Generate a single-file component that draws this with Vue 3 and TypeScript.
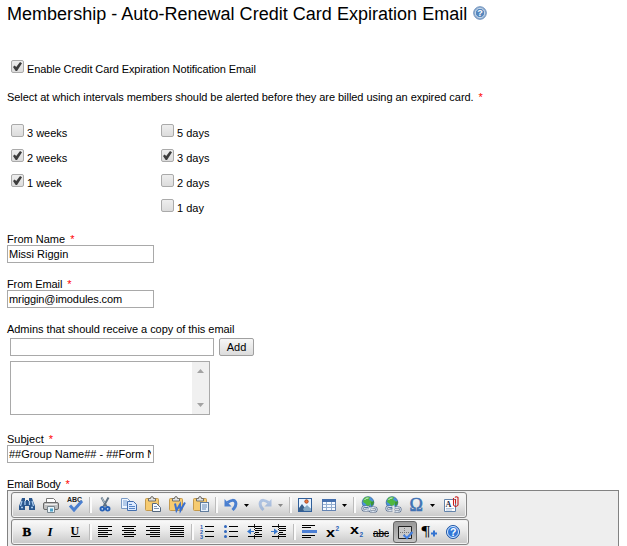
<script setup lang="ts">
import { ref } from 'vue'

interface Tool {
  kind: 'icon' | 'sep' | 'caret'
  name?: string
  art?: string
  active?: boolean
  muted?: boolean
}

const weeks = ref([
  { label: '3 weeks', on: false },
  { label: '2 weeks', on: true },
  { label: '1 week', on: true },
])
const days = ref([
  { label: '5 days', on: false },
  { label: '3 days', on: true },
  { label: '2 days', on: false },
  { label: '1 day', on: false },
])
const enabled = ref(true)
const fromName = ref('Missi Riggin')
const fromEmail = ref('mriggin@imodules.com')
const admin = ref('')
const subject = ref('##Group Name## - ##Form Name##')

const icon = (name: string, art: string, active = false): Tool => ({ kind: 'icon', name, art, active })
const sep: Tool = { kind: 'sep' }
const caret = (muted = false): Tool => ({ kind: 'caret', muted })

const rules = (rows: [number, number][], y = 6) =>
  rows.map(([x, w], i) => `<rect x="${x}" y="${y + i * 2}" width="${w}" height="1" fill="#000"/>`).join('')

const serif = 'font-family="Liberation Serif, serif"'
const sans = 'font-family="Liberation Sans, sans-serif"'
const clipboard =
  '<rect x="4.500" y="5.500" width="13" height="12" rx="1" fill="#f6cb70" stroke="#c59a4c"/><path d="M7.500 8V5.500h2q0-2 1.500-2t1.500 2h2V8z" fill="#dde0e3" stroke="#68655e" stroke-width=".9"/>'
const globe =
  '<circle cx="11" cy="9.500" r="5.800" fill="#4a92dd" stroke="#33689c" stroke-width=".8"/><path d="M7 5q3-2 6-1l-1 3 3 1-2 4-3 2-1-3-3-2z" fill="#4fb83e"/><path d="M14 9l3-1q0 4-3 5z" fill="#3b9435"/><path d="M7.500 7q1.500-2.500 4-2" stroke="#e0f4ef" fill="none"/>'
const link = (gap: boolean) => {
  const rings = '<rect x="5.500" y="13.500" width="7" height="4" rx="2"/><rect x="12.500" y="14.500" width="7" height="4" rx="2"/>'
  return `<g fill="none" stroke="#5d7190" stroke-width="2.200">${rings}</g><g fill="none" stroke="#d8e3f0" stroke-width="1">${rings}</g>${gap ? '<path d="M12.500 12.500v7" stroke="#e4e4e4" stroke-width="2"/>' : '<path d="M9.500 16h6" stroke="#eef4fa"/>'}`
}
const undo =
  '<path d="M8.500 9.500q6-4 8-.5 1.500 4-3 8" fill="none" stroke="#4a7fd0" stroke-width="3"/><path d="M5.500 6v7.500h7z" fill="#4a7fd0"/>'
const indentRules =
  '<path d="M5 6.500h14M12 8.500h7m-7 2h7m-7 2h4m-4 2h7M5 16.500h14" stroke="#000"/><path d="M11.500 4v2m0 1v1m0 1v1m0 3v1m0 1v1m0 1v2" stroke="#222"/>'

const topRow: Tool[] = [
  icon('Find', '<path d="M7 5h3v3h1V7h2v1h1V5h3l1 3 2 5v4h-6v-4h-4v4H4v-4l2-5z" fill="#29578f"/><path d="M7 8l-1.500 5M10 8v4M14.500 8v4M17 8l1.500 5M6 14.500h2M16 14.500h2" stroke="#a9cbef" stroke-width="1.300"/>'),
  icon('Print', '<path d="M7.500 10V5.500h7l2 2V10" fill="#fff" stroke="#777"/><rect x="4.500" y="9.500" width="15" height="7" rx="1.500" fill="#c0c0c0" stroke="#696969"/><path d="M6 11.500h12" stroke="#eee"/><path d="M8.500 13.500h7v6h-7z" fill="#eaf5fb" stroke="#79858d"/><path d="M11 15.500h3v3h-3z" fill="#4ba2ca"/>'),
  icon('Spell check', `<text x="4" y="9" font-size="7" font-weight="bold" textLength="15" ${sans} fill="#222">ABC</text><path d="M7 12.500l4 4.500 8-9" fill="none" stroke="#4b7fd0" stroke-width="3"/>`),
  sep,
  icon('Cut', '<path d="M8.500 4.500l5 9M15.500 4.500l-5 9" stroke="#5f7385" stroke-width="2"/><path d="M9 5l2.500 5" stroke="#dce7ef" stroke-width=".7"/><circle cx="9.300" cy="15.800" r="1.800" fill="#cfe0f5" stroke="#2862b7" stroke-width="1.900"/><circle cx="14.700" cy="15.800" r="1.800" fill="#cfe0f5" stroke="#2862b7" stroke-width="1.900"/>'),
  icon('Copy', '<path d="M4.500 5.500h6l3 3v7h-9z" fill="#edf5ff" stroke="#7b9bc5"/><path d="M6 8h4m-4 2h5m-5 2h5" stroke="#79a0d5"/><path d="M10.500 8.500h6l3 3v6h-9z" fill="#dceaff" stroke="#446fae"/><path d="M12 11.500h3m-3 2h6m-6 2h6" stroke="#5684c5"/>'),
  icon('Paste', clipboard + '<path d="M11.500 10.500h4l4 4v4h-8z" fill="#f7fbff" stroke="#54677d"/><path d="M13 13.500h3m-3 2h5" stroke="#7e94b1"/>'),
  icon('Paste from Word', clipboard + '<path d="M10 10.500l1.500 7 3.500-6 .5 6 4.500-8" fill="none" stroke="#3a70cf" stroke-width="2"/>'),
  icon('Paste as text', clipboard + '<rect x="11.500" y="9.500" width="8" height="9" fill="#e9f2fd" stroke="#617d9e"/><path d="M13 12h5m-5 2h5m-5 2h4" stroke="#6789b4"/>'),
  sep,
  icon('Undo', undo),
  caret(),
  icon('Redo', `<g transform="translate(24 0) scale(-1 1)" opacity=".38">${undo}</g>`),
  caret(true),
  sep,
  icon('Image', '<rect x="5.500" y="5.500" width="13" height="13" fill="#e6f2ff" stroke="#315f99"/><path d="M6 18v-3l3-4 3 4 2-2 4 3v2z" fill="#385f8c"/><path d="M10 16l4-4 4 4v2h-7z" fill="#86a9c5"/><circle cx="13.500" cy="8.500" r="1.700" fill="#ef793e" stroke="#a94824"/>'),
  icon('Table', '<rect x="5.500" y="6.500" width="13" height="11" fill="#f5f9ff" stroke="#6584b3"/><path d="M5 6h14v3H5z" fill="#446fae"/><path d="M9.500 9v8m5-8v8M6 11.500h12m-12 3h12" stroke="#94aed0"/>'),
  caret(),
  sep,
  icon('Insert link', globe + link(false)),
  icon('Remove link', globe + link(true)),
  icon('Symbol', `<text x="4.500" y="17.500" font-size="18" ${serif} fill="#3f72b4" stroke="#3f72b4" stroke-width=".6">Ω</text>`),
  caret(),
  icon('Template', `<path d="M5.500 6.500h11v12h-11z" fill="#fff" stroke="#6283aa"/><text x="6.500" y="14" font-size="8" font-weight="bold" ${serif} fill="#222a42">A</text><path d="M7 15.500h8m-8 1.500h6" stroke="#9fb6d4" stroke-width=".8"/><path d="M16.500 6v4.500M14.500 5v7q2 3 4.500 0V4.500q-2-1.500-3 0" fill="none" stroke="#c91f1d" stroke-width="1.100"/>`),
]

const full: [number, number] = [5, 14]
const bottomRow: Tool[] = [
  icon('Bold', `<text x="7.500" y="16" font-size="13" font-weight="bold" ${serif} stroke="#000" stroke-width=".4">B</text>`),
  icon('Italic', `<text x="8.500" y="16" font-size="13" font-weight="bold" font-style="italic" ${serif}>I</text>`),
  icon('Underline', `<text x="7.500" y="15" font-size="12" font-weight="bold" ${serif}>U</text><path d="M8 16.500h9" stroke="#000"/>`),
  sep,
  icon('Align left', rules([full, [5, 10], full, [5, 10], full, [5, 10]])),
  icon('Align center', rules([full, [7, 10], full, [7, 10], full, [7, 10]])),
  icon('Align right', rules([full, [9, 10], full, [9, 10], full, [9, 10]])),
  icon('Justify', rules([full, full, full, full, full, full])),
  sep,
  icon('Numbered list', `<g ${sans} font-size="5.500" font-weight="bold" fill="#285bb5"><text x="5" y="8.500">1</text><text x="5" y="13.500">2</text><text x="5" y="18.500">3</text></g><path d="M10 6.500h9m-9 5h9m-9 5h9" stroke="#000"/>`),
  icon('Bulleted list', '<g fill="#3268bd"><circle cx="6.500" cy="6.500" r="1.500"/><circle cx="6.500" cy="11.500" r="1.500"/><circle cx="6.500" cy="16.500" r="1.500"/></g><path d="M10 6.500h9m-9 5h9m-9 5h9" stroke="#000"/>'),
  icon('Outdent', indentRules + '<path d="M8 8.500v6l-4-3z" fill="#3978cd"/><path d="M7 11.500h4" stroke="#3978cd"/>'),
  icon('Indent', indentRules + '<path d="M7 8.500v6l4-3z" fill="#3978cd"/><path d="M4 11.500h4" stroke="#3978cd"/>'),
  sep,
  icon('Horizontal rule', '<path d="M5 5.500h13M5 7.500h9M5 15.500h13M5 17.500h9" stroke="#000"/><rect x="5" y="10" width="15" height="3" fill="#4c7fd4"/>'),
  icon('Superscript', `<text x="5" y="17" font-size="13" font-weight="bold" textLength="9" lengthAdjust="spacingAndGlyphs" ${sans}>x</text><text x="14.500" y="10.500" font-size="6.500" font-weight="bold" ${sans} fill="#285eb5">2</text>`),
  icon('Subscript', `<text x="5" y="14" font-size="13" font-weight="bold" textLength="9" lengthAdjust="spacingAndGlyphs" ${sans}>x</text><text x="14.500" y="16.500" font-size="6.500" font-weight="bold" ${sans} fill="#285eb5">2</text>`),
  icon('Strikethrough', `<text x="4" y="16.500" font-size="11" textLength="16" lengthAdjust="spacingAndGlyphs" ${sans} stroke="#000" stroke-width=".2">abc</text><path d="M4 13.500h16" stroke="#000"/>`),
  icon('Show borders', '<path d="M5.500 5.500h13v12h-13z" fill="#c9c9c9" stroke="#222"/><path d="M11.500 7v10" stroke="#777" stroke-dasharray="1 1"/><path d="M7 11.500h11" stroke="#777" stroke-dasharray="1 1"/><path d="M10.500 14l3.500 3 5.500-6" fill="none" stroke="#4480e0" stroke-width="2.200"/>', true),
  icon('Paragraph', `<text x="4.500" y="16" font-size="15" textLength="8.500" lengthAdjust="spacingAndGlyphs" ${serif}>¶</text><path d="M14 13.500h6m-3-3v6" stroke="#3474d1" stroke-width="2"/>`),
  icon('Help', `<circle cx="12" cy="12" r="6.500" fill="#3177d7" stroke="#2357a3"/><circle cx="12" cy="12" r="5.500" fill="none" stroke="#d9eaff"/><text x="9" y="16" font-size="10.500" font-weight="bold" ${sans} fill="#fff">?</text>`),
]
const toolRows = [topRow, bottomRow]
</script>

<template>
  <main class="page">
    <h1 class="title">
      <span class="title-text">Membership - Auto-Renewal Credit Card Expiration Email</span>
      <svg class="help" viewBox="0 0 14 14" aria-label="Help">
        <circle cx="7" cy="7" r="6.300" fill="#91add0" stroke="#6d91bd" />
        <circle cx="7" cy="7" r="4.700" fill="#5486bd" stroke="#cfdeee" />
        <text x="4.300" y="10.300" font-size="9" font-weight="bold" fill="#fff">?</text>
      </svg>
    </h1>

    <label class="check enable"><input v-model="enabled" type="checkbox"><span>Enable Credit Card Expiration Notification Email</span></label>
    <p class="intro">Select at which intervals members should be alerted before they are billed using an expired card. <b>*</b></p>

    <div class="intervals">
      <div class="column">
        <label v-for="item in weeks" :key="item.label" class="check"><input v-model="item.on" type="checkbox"><span>{{ item.label }}</span></label>
      </div>
      <div class="column">
        <label v-for="item in days" :key="item.label" class="check"><input v-model="item.on" type="checkbox"><span>{{ item.label }}</span></label>
      </div>
    </div>

    <div class="field">
      <label>From Name <b>*</b></label>
      <input v-model="fromName" class="textbox" type="text">
    </div>
    <div class="field">
      <label class="email-label">From Email <b>*</b></label>
      <input v-model="fromEmail" class="textbox email" type="text">
    </div>
    <div class="field admins">
      <label class="admin-label">Admins that should receive a copy of this email</label>
      <div class="add-row">
        <input v-model="admin" class="textbox wide" type="text">
        <button type="button" class="add">Add</button>
      </div>
      <div class="listbox">
        <div class="track">
          <svg viewBox="0 0 7 4"><path d="M0 4L3.500 0 7 4z" fill="#a3a3a3" /></svg>
          <svg viewBox="0 0 7 4"><path d="M0 0h7L3.500 4z" fill="#a3a3a3" /></svg>
        </div>
      </div>
    </div>
    <div class="field">
      <label>Subject <b>*</b></label>
      <input v-model="subject" class="textbox" type="text">
    </div>
    <div class="field">
      <label class="body-label">Email Body <b>*</b></label>
      <div class="editor">
        <div v-for="(row, r) in toolRows" :key="r" class="toolbar">
          <template v-for="(tool, i) in row" :key="i">
            <span v-if="tool.kind === 'sep'" class="sep" />
            <span v-else-if="tool.kind === 'caret'" class="caret" :class="{ muted: tool.muted }" />
            <button v-else type="button" class="tool" :class="{ active: tool.active }" :aria-label="tool.name">
              <svg viewBox="0 0 24 24" v-html="tool.art" />
            </button>
          </template>
        </div>
      </div>
    </div>
  </main>
</template>

<style>
body { margin: 0; background: #fff; overflow: hidden; }
</style>

<style scoped>
* { box-sizing: border-box; }
.page { height: 546px; overflow: hidden; padding: 0 8px 0 7px; font: 11px/14px "Liberation Sans", Arial, sans-serif; color: #000; }
.title { display: flex; align-items: flex-start; gap: 6px; height: 60px; margin: 0; padding-top: 3px; font-size: 18px; font-weight: 400; line-height: 22px; white-space: nowrap; }
.title-text { width: 460px; letter-spacing: 0.02px; }
.help { width: 14px; height: 14px; margin-top: 3px; }
.check { display: flex; align-items: flex-start; height: 25px; padding-left: 4px; }
.check span { padding: 2px 0 0 3px; white-space: nowrap; }
.check input { appearance: none; flex: none; width: 13px; height: 13px; margin: 0; border: 1px solid #aaa; border-radius: 2px; background: linear-gradient(#eee, #dcdcdc); display: grid; place-items: center; }
.check input:checked::before { content: ""; width: 9px; height: 9px; background: #3d3d3d; clip-path: polygon(0 55%, 18% 38%, 36% 56%, 78% 0, 100% 15%, 45% 100%, 30% 100%); }
.enable { height: 30px; }
.enable span { letter-spacing: -0.1px; }
.intro { height: 34px; margin: 0; letter-spacing: -0.05px; }
b { margin-left: 2px; font-weight: 400; color: #f00; }
.intervals { display: flex; height: 108px; }
.column { width: 150px; }
.field { height: 45px; }
.field > label { display: block; height: 13px; line-height: 14px; }
.textbox { display: block; width: 147px; height: 18px; margin: 0; padding: 0 2px 0 1px; border: 1px solid #a9a9a9; border-radius: 0; outline: 0; background: #fff; color: #000; font: inherit; }
.textbox.email { letter-spacing: -0.1px; }
.admins { height: 110px; }
.field > .email-label { letter-spacing: -0.1px; }
.field > .admin-label { height: 16px; letter-spacing: -0.04px; }
.field > .body-label { letter-spacing: -0.2px; }
.add-row { display: flex; align-items: flex-start; gap: 5px; padding-left: 3px; }
.wide { width: 204px; }
.add { width: 35px; height: 18px; padding: 0; border: 1px solid #a0a0a0; border-radius: 2px; background: linear-gradient(#f7f7f7, #dcdcdc); color: #000; font: inherit; }
.listbox { display: flex; justify-content: flex-end; width: 200px; height: 54px; margin: 5px 0 0 3px; border: 1px solid #a9a9a9; }
.track { display: flex; flex-direction: column; justify-content: space-between; align-items: center; width: 17px; padding: 7px 0; background: #f0f0f0; }
.track svg { width: 7px; height: 4px; }
.editor { display: flex; flex-direction: column; align-items: flex-start; gap: 1px; width: 612px; height: 200px; padding: 1px 3px; border: 1px solid #828282; background: #eee; }
.toolbar { display: flex; align-items: stretch; height: 26px; padding: 0 3px; border: 1px solid #858585; border-radius: 3px; background: linear-gradient(#fafafa, #e9e9e9 45%, #c8c8c8); box-shadow: inset 0 0 0 1px #f2f2f2; }
.tool { width: 24px; height: 24px; padding: 0; border: 0; background: none; }
.tool svg { display: block; width: 24px; height: 24px; }
.tool.active { height: 22px; margin-top: 1px; border: 1px solid #666; border-radius: 3px; background: linear-gradient(#999, #c3c3c3); }
.active svg { margin: -1px 0 0 -1px; }
.sep { width: 6px; padding: 4px 2px; }
.sep::before { content: ""; display: block; width: 2px; height: 16px; border-left: 1px solid #bcbcbc; background: #fafafa; }
.caret { width: 10px; padding: 11px 0 0 1px; }
.caret::before { content: ""; display: block; width: 5px; height: 3px; background: #000; clip-path: polygon(0 0, 100% 0, 50% 100%); }
.caret.muted::before { background: #888; }
</style>
